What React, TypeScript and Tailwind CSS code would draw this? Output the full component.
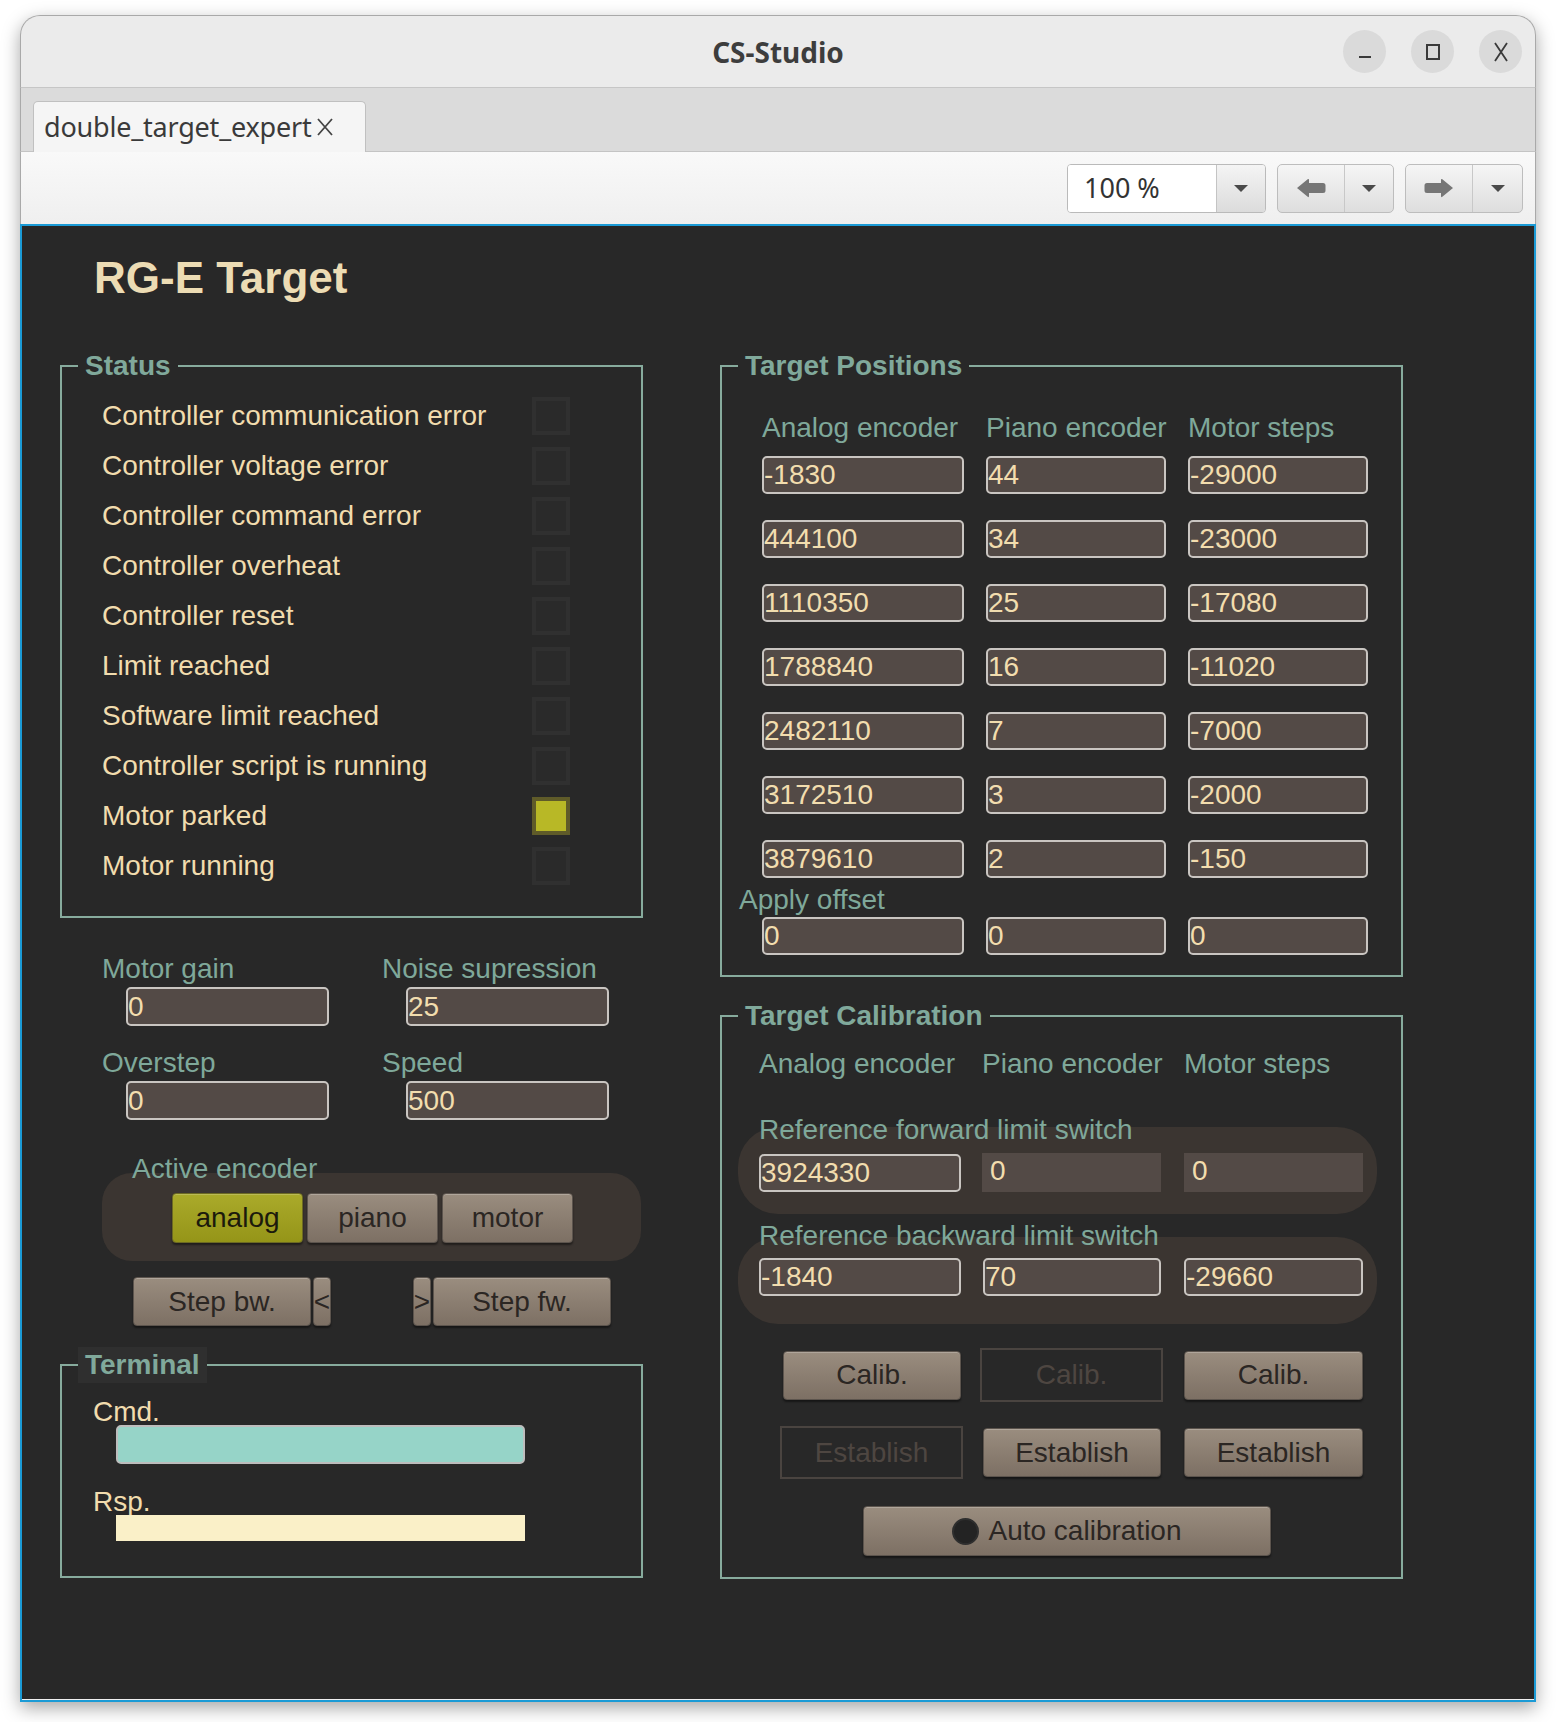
import React from "react";

const statusItems = [
  "Controller communication error",
  "Controller voltage error",
  "Controller command error",
  "Controller overheat",
  "Controller reset",
  "Limit reached",
  "Software limit reached",
  "Controller script is running",
  "Motor parked",
  "Motor running",
];

const positions = [
  ["-1830", "44", "-29000"],
  ["444100", "34", "-23000"],
  ["1110350", "25", "-17080"],
  ["1788840", "16", "-11020"],
  ["2482110", "7", "-7000"],
  ["3172510", "3", "-2000"],
  ["3879610", "2", "-150"],
];

const Field: React.FC<{ value: string; className?: string }> = ({ value, className = "" }) => (
  <div
    className={
      "flex items-center bg-[#534a46] border-2 border-[#c9c5c1] rounded-[5px] text-[28px] leading-none text-[#f2ddae] overflow-hidden " +
      className
    }
  >
    {value}
  </div>
);

const PlainField: React.FC<{ value: string; className?: string }> = ({ value, className = "" }) => (
  <div className={"flex items-start pt-[2px] pl-[8px] bg-[#534a46] text-[28px] leading-[32px] text-[#f2ddae] " + className}>
    {value}
  </div>
);

const Btn: React.FC<{ children: React.ReactNode; className?: string }> = ({ children, className = "" }) => (
  <div
    className={
      "flex items-center justify-center rounded-[4px] border border-[#5c544d] bg-gradient-to-b from-[#9a8d7f] to-[#7d7064] shadow-[inset_0_1px_0_rgba(255,255,255,0.22),0_2px_2px_rgba(0,0,0,0.45)] text-[28px] leading-none text-[#2b2623] " +
      className
    }
  >
    {children}
  </div>
);

const OffBtn: React.FC<{ children: React.ReactNode; className?: string }> = ({ children, className = "" }) => (
  <div
    className={
      "flex items-center justify-center border-2 border-[#4a4440] text-[28px] leading-none text-[#4e4641] " + className
    }
  >
    {children}
  </div>
);

const Legend: React.FC<{ children: React.ReactNode }> = ({ children }) => (
  <legend className="ml-[16px] px-[7px] text-[28px] font-bold leading-[32px] text-[#80a99b]">{children}</legend>
);

const Label: React.FC<{ children: React.ReactNode; className?: string }> = ({ children, className = "" }) => (
  <div className={"whitespace-nowrap text-[28px] leading-[32px] text-[#7fa89a] " + className}>{children}</div>
);

const Caret = () => (
  <svg width="16" height="9" viewBox="0 0 16 9">
    <path d="M1 1 L15 1 L8 8 Z" fill="#4a4a4a" />
  </svg>
);

const Led: React.FC<{ on?: boolean }> = ({ on }) =>
  on ? (
    <div className="w-[38px] h-[38px] border-[4px] border-[#5f5b29] bg-[#b8b826]" />
  ) : (
    <div className="w-[38px] h-[38px] border-[4px] border-[#303030] bg-[#2a2a2a]" />
  );

export default function App() {
  return (
    <div className="w-[1556px] h-[1722px] bg-white pt-[15px] pl-[20px] overflow-hidden font-['Liberation_Sans',Arial,sans-serif]">
      <div className="w-[1516px] h-[1687px] flex flex-col rounded-t-[20px] shadow-[0_6px_18px_rgba(0,0,0,0.35)]">
        {/* title bar */}
        <div className="h-[73px] grid grid-cols-[1fr_auto_1fr] items-center bg-[#ebebeb] border border-[#a9a9a9] border-b-[#c6c6c6] rounded-t-[20px]">
          <div />
          <div className="font-['Noto_Sans',sans-serif] font-bold text-[28px] text-[#3d3d3d]">CS-Studio</div>
          <div className="flex justify-end gap-[25px] pr-[13px]">
            <div className="w-[43px] h-[43px] rounded-full bg-[#dadada] flex items-center justify-center">
              <svg width="18" height="18" viewBox="0 0 18 18">
                <rect x="3" y="13" width="12" height="2" fill="#3a3a3a" />
              </svg>
            </div>
            <div className="w-[43px] h-[43px] rounded-full bg-[#dadada] flex items-center justify-center">
              <svg width="18" height="18" viewBox="0 0 18 18">
                <rect x="3" y="2" width="12" height="14" fill="none" stroke="#3a3a3a" strokeWidth="2" />
              </svg>
            </div>
            <div className="w-[43px] h-[43px] rounded-full bg-[#dadada] flex items-center justify-center">
              <svg width="18" height="20" viewBox="0 0 18 20">
                <path d="M3 1 L15 19 M15 1 L3 19" stroke="#3a3a3a" strokeWidth="1.8" />
              </svg>
            </div>
          </div>
        </div>

        {/* tab bar */}
        <div className="h-[64px] flex items-end pl-[12px] bg-[#dbdbdb] border-x border-b border-[#a9a9a9] border-b-[#c4c4c4]">
          <div className="relative -mb-[1px] w-[333px] h-[51px] flex items-center pl-[10px] bg-[#f5f5f5] border border-b-0 border-[#c0c0c0] rounded-t-[5px] font-['Noto_Sans',sans-serif] text-[27px] text-[#3a3a3a]">
            <span className="tracking-[-0.2px]">double_target_expert</span>
            <svg className="ml-[5px]" width="18" height="20" viewBox="0 0 18 20">
              <path d="M2 2 L16 18 M16 2 L2 18" stroke="#444" strokeWidth="1.8" />
            </svg>
          </div>
        </div>

        {/* toolbar */}
        <div className="h-[72px] flex items-center justify-end gap-[11px] pr-[12px] bg-gradient-to-b from-[#f9f9f9] to-[#efefef] border-x border-[#a9a9a9]">
          <div className="w-[199px] h-[49px] flex rounded-[4px] border border-[#bababa] overflow-hidden">
            <div className="w-[148px] bg-white flex items-center pl-[16px] font-['Noto_Sans',sans-serif] text-[27px] text-[#333]">100 %</div>
            <div className="flex-1 flex items-center justify-center border-l border-[#c4c4c4] bg-gradient-to-b from-[#f4f4f4] to-[#dcdcdc]">
              <Caret />
            </div>
          </div>
          <div className="w-[117px] h-[49px] flex rounded-[5px] border border-[#bdbdbd] bg-gradient-to-b from-[#f5f5f5] to-[#dedede]">
            <div className="w-[66px] flex items-center justify-center">
              <svg width="30" height="20" viewBox="0 0 30 20">
                <path d="M1 10 L12 1 Q13 0.5 13 2 L13 5 L27 5 Q29.5 5 29.5 7.5 L29.5 12.5 Q29.5 15 27 15 L13 15 L13 18 Q13 19.5 12 19 Z" fill="#767676" />
              </svg>
            </div>
            <div className="flex-1 flex items-center justify-center border-l border-[#c8c8c8]">
              <Caret />
            </div>
          </div>
          <div className="w-[118px] h-[49px] flex rounded-[5px] border border-[#bdbdbd] bg-gradient-to-b from-[#f5f5f5] to-[#dedede]">
            <div className="w-[66px] flex items-center justify-center">
              <svg width="30" height="20" viewBox="0 0 30 20">
                <path d="M29 10 L18 1 Q17 0.5 17 2 L17 5 L3 5 Q0.5 5 0.5 7.5 L0.5 12.5 Q0.5 15 3 15 L17 15 L17 18 Q17 19.5 18 19 Z" fill="#767676" />
              </svg>
            </div>
            <div className="flex-1 flex items-center justify-center border-l border-[#c8c8c8]">
              <Caret />
            </div>
          </div>
        </div>

        {/* display */}
        <div className="flex-1 bg-[#282828] border-2 border-[#1b9bd6] shadow-[inset_0_-1px_0_#f0f0f0]">
          <div className="pt-[30px] pl-[72px] text-[44px] leading-[44px] font-bold text-[#ecdcb4]">RG-E Target</div>

          <div className="mt-[50px] pl-[38px] flex gap-[77px]">
            {/* left column */}
            <div className="w-[583px] flex flex-col">
              <fieldset className="border-2 border-[#87ab9d]">
                <Legend>Status</Legend>
                <div className="pt-[9px] pb-[25px] pl-[40px]">
                  {statusItems.map((s) => (
                    <div key={s} className="h-[50px] flex items-center">
                      <div className="w-[430px] text-[28px] leading-[32px] text-[#f1dcae]">{s}</div>
                      <Led on={s === "Motor parked"} />
                    </div>
                  ))}
                </div>
              </fieldset>

              <div className="mt-[35px] ml-[42px] grid grid-cols-[280px_280px]">
                <div>
                  <Label>Motor gain</Label>
                  <Field value="0" className="ml-[24px] mt-[2px] w-[203px] h-[39px]" />
                </div>
                <div>
                  <Label>Noise supression</Label>
                  <Field value="25" className="ml-[24px] mt-[2px] w-[203px] h-[39px]" />
                </div>
                <div className="mt-[21px]">
                  <Label>Overstep</Label>
                  <Field value="0" className="ml-[24px] mt-[2px] w-[203px] h-[39px]" />
                </div>
                <div className="mt-[21px]">
                  <Label>Speed</Label>
                  <Field value="500" className="ml-[24px] mt-[2px] w-[203px] h-[39px]" />
                </div>
              </div>

              <Label className="relative z-10 mt-[33px] ml-[72px]">Active encoder</Label>
              <div className="-mt-[12px] ml-[42px] w-[539px] h-[88px] rounded-[30px] bg-[#3b3531] pt-[20px] pl-[70px] flex items-start gap-[4px]">
                <div className="w-[131px] h-[50px] flex items-center justify-center rounded-[4px] border border-[#6c6a22] bg-gradient-to-b from-[#aaaa2a] to-[#959518] shadow-[inset_0_1px_0_rgba(255,255,255,0.2),0_2px_2px_rgba(0,0,0,0.45)] text-[28px] leading-none text-[#1b1a0c]">
                  analog
                </div>
                <Btn className="w-[131px] h-[50px] text-[#1e1b19]">piano</Btn>
                <Btn className="w-[131px] h-[50px] text-[#1e1b19]">motor</Btn>
              </div>

              <div className="mt-[16px] h-[49px] flex">
                <Btn className="ml-[73px] w-[178px] h-[49px]">Step bw.</Btn>
                <Btn className="ml-[2px] w-[18px] h-[49px]">&lt;</Btn>
                <Btn className="ml-[82px] w-[18px] h-[49px]">&gt;</Btn>
                <Btn className="ml-[2px] w-[178px] h-[49px]">Step fw.</Btn>
              </div>

              <fieldset className="mt-[21px] border-2 border-[#87ab9d]">
                <legend className="ml-[16px] px-[7px] h-[36px] bg-[#2f2f2f] text-[28px] font-bold leading-[36px] text-[#80a99b]">
                  Terminal
                </legend>
                <div className="pt-[15px] pl-[31px] pb-[35px]">
                  <div className="text-[28px] leading-[28px] text-[#f1dcae]">Cmd.</div>
                  <div className="ml-[23px] -mt-[1px] w-[409px] h-[39px] rounded-[5px] border-2 border-[#bdbdbd] bg-[#96d4c8]" />
                  <div className="mt-[24px] text-[28px] leading-[28px] text-[#f1dcae]">Rsp.</div>
                  <div className="relative ml-[23px] -mt-[1px] w-[409px] h-[26px] bg-[#faf0c8]" />
                </div>
              </fieldset>
            </div>

            {/* right column */}
            <div className="w-[683px] flex flex-col">
              <fieldset className="border-2 border-[#87ab9d]">
                <Legend>Target Positions</Legend>
                <div className="pt-[30px] pl-[40px] pb-[20px]">
                  <div className="grid grid-cols-[202px_180px_180px] gap-x-[22px]">
                    <Label>Analog encoder</Label>
                    <Label>Piano encoder</Label>
                    <Label>Motor steps</Label>
                  </div>
                  <div className="mt-[12px] flex flex-col gap-[26px]">
                    {positions.map((r, i) => (
                      <div key={i} className="grid grid-cols-[202px_180px_180px] gap-x-[22px]">
                        {r.map((v, j) => (
                          <Field key={j} value={v} className="h-[38px]" />
                        ))}
                      </div>
                    ))}
                  </div>
                  <Label className="mt-[6px] -ml-[23px]">Apply offset</Label>
                  <div className="mt-[1px] grid grid-cols-[202px_180px_180px] gap-x-[22px]">
                    <Field value="0" className="h-[38px]" />
                    <Field value="0" className="h-[38px]" />
                    <Field value="0" className="h-[38px]" />
                  </div>
                </div>
              </fieldset>

              <fieldset className="mt-[23px] border-2 border-[#87ab9d]">
                <Legend>Target Calibration</Legend>
                <div className="pt-[16px] pb-[21px]">
                  <div className="pl-[37px] flex">
                    <Label className="w-[223px]">Analog encoder</Label>
                    <Label className="w-[202px]">Piano encoder</Label>
                    <Label>Motor steps</Label>
                  </div>

                  <Label className="relative z-10 mt-[34px] ml-[37px]">Reference forward limit switch</Label>
                  <div className="-mt-[19px] ml-[16px] w-[639px] h-[87px] rounded-[40px] bg-[#3b3531] pt-[26px] pl-[21px] flex items-start">
                    <Field value="3924330" className="mt-[1px] w-[202px] h-[38px]" />
                    <PlainField value="0" className="ml-[21px] w-[179px] h-[39px]" />
                    <PlainField value="0" className="ml-[23px] w-[179px] h-[39px]" />
                  </div>

                  <Label className="relative z-10 mt-[6px] ml-[37px]">Reference backward limit switch</Label>
                  <div className="-mt-[15px] ml-[16px] w-[639px] h-[87px] rounded-[40px] bg-[#3b3531] pt-[21px] pl-[21px] flex items-start">
                    <Field value="-1840" className="w-[202px] h-[38px]" />
                    <Field value="70" className="ml-[22px] w-[178px] h-[38px]" />
                    <Field value="-29660" className="ml-[23px] w-[179px] h-[38px]" />
                  </div>

                  <div className="mt-[24px] h-[54px] flex items-center">
                    <Btn className="ml-[61px] w-[178px] h-[49px]">Calib.</Btn>
                    <OffBtn className="ml-[19px] w-[183px] h-[54px]">Calib.</OffBtn>
                    <Btn className="ml-[21px] w-[179px] h-[49px]">Calib.</Btn>
                  </div>

                  <div className="mt-[24px] h-[53px] flex items-center">
                    <OffBtn className="ml-[58px] w-[183px] h-[53px]">Establish</OffBtn>
                    <Btn className="ml-[20px] w-[178px] h-[49px]">Establish</Btn>
                    <Btn className="ml-[23px] w-[179px] h-[49px]">Establish</Btn>
                  </div>

                  <Btn className="mt-[27px] ml-[141px] w-[408px] h-[50px] gap-[9px]">
                    <span className="w-[27px] h-[27px] rounded-full bg-[#232323] border-2 border-[#2e2e2e]" />
                    <span>Auto calibration</span>
                  </Btn>
                </div>
              </fieldset>
            </div>
          </div>
        </div>
      </div>
    </div>
  );
}
